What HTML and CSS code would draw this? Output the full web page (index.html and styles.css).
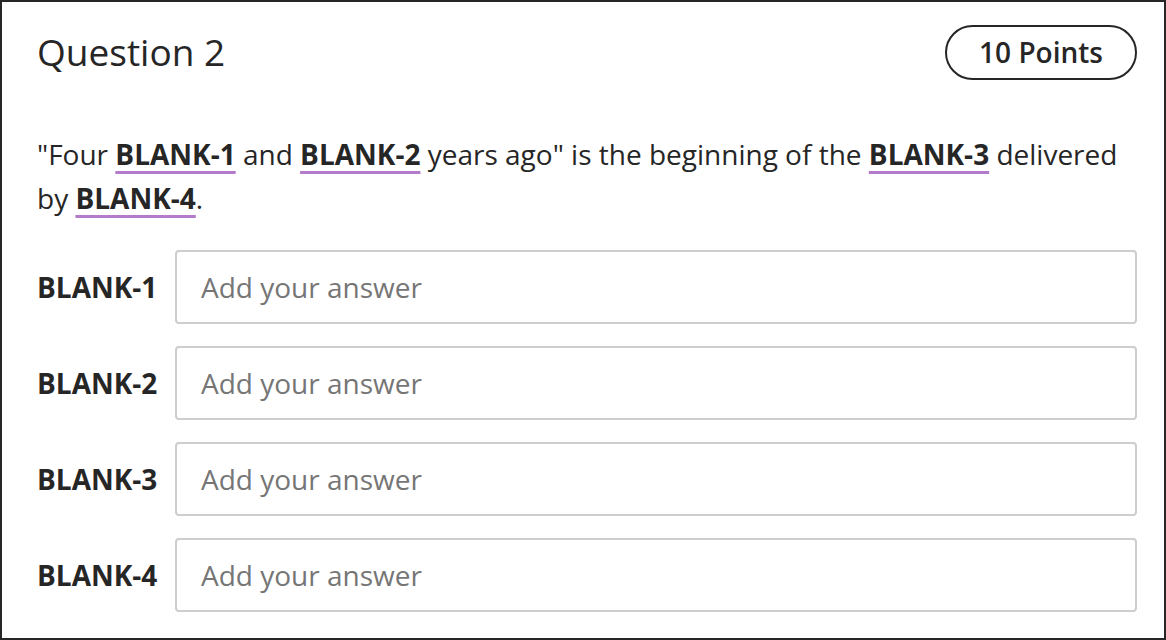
FILE: index.html
```html
<!DOCTYPE html>
<html lang="en">
<head>
<meta charset="utf-8">
<title>Question 2</title>
<link rel="stylesheet" href="styles.css">
</head>
<body>
<main class="card">
  <header class="card-head">
    <h1 class="title">Question 2</h1>
    <span class="points">10 Points</span>
  </header>
  <p class="prompt">"Four <span class="blank">BLANK-1</span> and <span class="blank">BLANK-2</span> years ago" is the beginning of the <span class="blank">BLANK-3</span> delivered by <span class="blank">BLANK-4</span>.</p>
  <div class="answers">
    <label class="answer-row"><span class="answer-label">BLANK-1</span><input class="answer-input" type="text" placeholder="Add your answer"></label>
    <label class="answer-row"><span class="answer-label">BLANK-2</span><input class="answer-input" type="text" placeholder="Add your answer"></label>
    <label class="answer-row"><span class="answer-label">BLANK-3</span><input class="answer-input" type="text" placeholder="Add your answer"></label>
    <label class="answer-row"><span class="answer-label">BLANK-4</span><input class="answer-input" type="text" placeholder="Add your answer"></label>
  </div>
</main>
</body>
</html>
```

FILE: styles.css
```css
* { box-sizing: border-box; }
html, body { margin: 0; padding: 0; background: #fff; }
body { font-family: "Open Sans", "Noto Sans", sans-serif; color: #262626; }

.card {
  width: 1166px;
  height: 640px;
  border: 2px solid #262626;
  background: #fff;
  padding: 19px 27px 0 35px;
  overflow: hidden;
}

.card-head {
  display: flex;
  justify-content: space-between;
  align-items: center;
}

.title {
  margin: 0;
  font-size: 37px;
  font-weight: 400;
  line-height: 62px;
  color: #262626;
}

.points {
  display: inline-flex;
  align-items: center;
  justify-content: center;
  height: 55px;
  padding: 0 32px;
  border: 2px solid #262626;
  border-radius: 28px;
  font-size: 28px;
  font-weight: 600;
  color: #262626;
}

.prompt {
  margin: 49px 0 0;
  font-size: 28px;
  line-height: 44px;
  color: #262626;
}

.blank {
  font-weight: 700;
  text-decoration: underline;
  text-decoration-color: #b47bcb;
  text-decoration-thickness: 3px;
  text-underline-offset: 6px;
}

.answers {
  display: flex;
  flex-direction: column;
  gap: 22px;
  margin-top: 30px;
}

.answer-row {
  display: flex;
  align-items: center;
  gap: 20px;
}

.answer-label {
  width: 118px;
  flex: none;
  font-size: 28px;
  font-weight: 700;
  color: #262626;
  white-space: nowrap;
}

.answer-input {
  flex: 1;
  min-width: 0;
  height: 74px;
  border: 2px solid #cdcdcd;
  border-radius: 4px;
  padding: 0 24px;
  font-family: inherit;
  font-size: 28px;
  color: #262626;
  background: #fff;
  outline: none;
}

.answer-input::placeholder { color: #767676; opacity: 1; }
```
